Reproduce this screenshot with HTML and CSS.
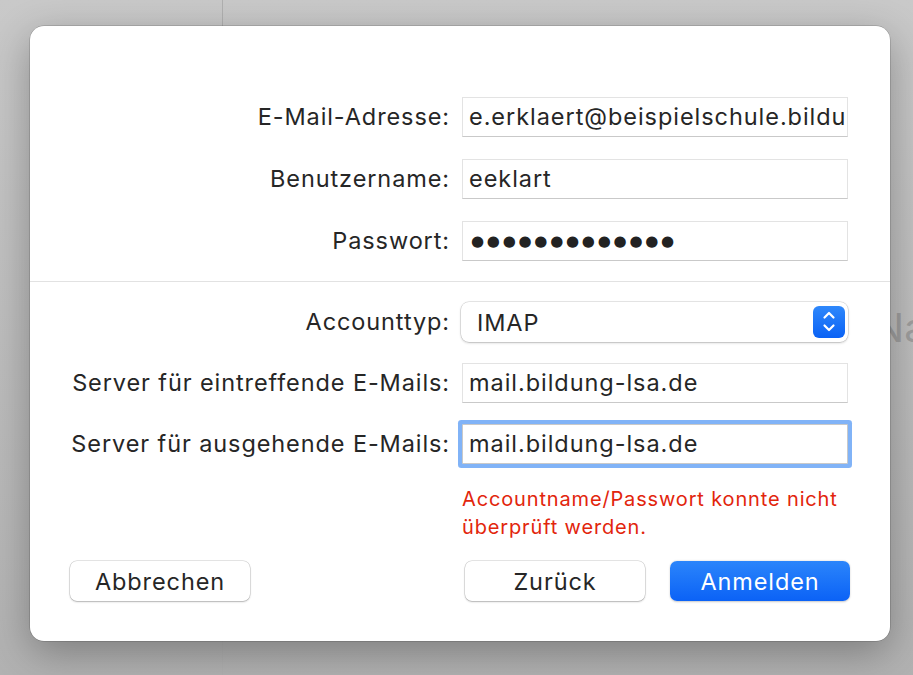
FILE: index.html
```html
<!DOCTYPE html>
<html lang="de">
<head>
<meta charset="utf-8">
<title>Account hinzufügen</title>
<link rel="stylesheet" href="styles.css">
</head>
<body>
<div class="desktop">
  <div class="bg-divider"></div>
  <div class="bg-title">Na</div>
  <div class="dialog">
    <div class="form">
      <div class="lbl">E-Mail-Adresse:</div>
      <div class="field">e.erklaert@beispielschule.bildu</div>
      <div class="lbl">Benutzername:</div>
      <div class="field">eeklart</div>
      <div class="lbl">Passwort:</div>
      <div class="field password">●●●●●●●●●●●●●</div>
    </div>
    <div class="sep"></div>
    <div class="form">
      <div class="lbl">Accounttyp:</div>
      <div class="popup">
        <span class="popup-text">IMAP</span>
        <span class="stepper">
          <svg width="32" height="32" viewBox="0 0 32 32"><path d="M11.5 11.5 L16 7 L20.5 11.5 M11.5 19.5 L16 24 L20.5 19.5" fill="none" stroke="#fff" stroke-width="2.2" stroke-linecap="round" stroke-linejoin="round"/></svg>
        </span>
      </div>
      <div class="lbl">Server für eintreffende E-Mails:</div>
      <div class="field">mail.bildung-lsa.de</div>
      <div class="lbl">Server für ausgehende E-Mails:</div>
      <div class="field focused">mail.bildung-lsa.de</div>
    </div>
    <div class="error">Accountname/Passwort konnte nicht<br>überprüft werden.</div>
    <div class="buttons">
      <button class="btn">Abbrechen</button>
      <button class="btn push">Zurück</button>
      <button class="btn primary">Anmelden</button>
    </div>
  </div>
</div>
</body>
</html>
```
FILE: styles.css
```css
html, body {
  margin: 0;
  padding: 0;
}
body {
  font-family: Inter, "Noto Sans", "DejaVu Sans", sans-serif;
  color: #262626;
}
.desktop {
  position: relative;
  width: 913px;
  height: 675px;
  overflow: hidden;
  background: linear-gradient(180deg, #c9c9c9 0%, #bdbdbd 50%, #b2b2b2 100%);
  padding-top: 26px;
  box-sizing: border-box;
}
.bg-divider {
  position: absolute;
  left: 222px;
  top: 0;
  bottom: 0;
  width: 1px;
  background: #b0b0b0;
}
.bg-title {
  position: absolute;
  left: 874px;
  top: 304px;
  white-space: nowrap;
  font-size: 40px;
  line-height: 48px;
  color: #9e9e9e;
}
.dialog {
  position: relative;
  margin-left: 30px;
  width: 860px;
  height: 615px;
  box-sizing: border-box;
  padding-top: 71px;
  background: #fff;
  border-radius: 14px;
  box-shadow: 0 0 0 0.5px rgba(0,0,0,0.25), 0 12px 40px rgba(0,0,0,0.3);
}
.form {
  display: grid;
  grid-template-columns: 419px 386px;
  column-gap: 13px;
  row-gap: 22px;
  align-items: center;
}
.form + .sep + .form {
  row-gap: 21px;
}
.lbl {
  justify-self: end;
  font-size: 23.5px;
  letter-spacing: 0.9px;
  line-height: 40px;
  white-space: nowrap;
  margin-right: -1px;
}
.field {
  height: 40px;
  box-sizing: border-box;
  border: 1px solid #e3e3e3;
  border-bottom-color: #c9c9c9;
  background: #fff;
  font-size: 23.5px;
  letter-spacing: 0.95px;
  line-height: 38px;
  padding-left: 6px;
  white-space: nowrap;
  overflow: hidden;
}
.field.password {
  font-family: "DejaVu Sans", sans-serif;
  font-size: 15px;
  letter-spacing: 2.75px;
  color: #222;
  padding-left: 8px;
}
.field.focused {
  border-color: #c9c9c9;
  box-shadow: 0 0 0 4px #81b3f7;
  border-radius: 1px;
}
.sep {
  height: 1px;
  background: #e2e2e2;
  margin: 20px 0 20px;
}
.popup {
  height: 40px;
  margin-left: -1px;
  box-sizing: border-box;
  border-radius: 8px;
  background: #fff;
  box-shadow: 0 0 0 0.5px rgba(0,0,0,0.18), 0 1px 2.5px rgba(0,0,0,0.2);
  display: flex;
  align-items: center;
  justify-content: space-between;
  padding: 0 3px 0 16px;
}
.popup-text {
  font-size: 23.5px;
  letter-spacing: 0.9px;
}
.stepper {
  width: 32px;
  height: 32px;
  border-radius: 6px;
  background: linear-gradient(180deg, #2f88fb 0%, #0a62f5 100%);
  display: flex;
}
.error {
  margin: 21px 0 0 432px;
  font-size: 20px;
  letter-spacing: 0.85px;
  line-height: 28px;
  color: #e2250c;
}
.buttons {
  display: flex;
  gap: 25px;
  padding: 0 40px;
  margin-top: 20px;
}
.btn {
  width: 180px;
  height: 40px;
  border-radius: 7px;
  border: none;
  background: #fff;
  box-shadow: 0 0 0 0.5px rgba(0,0,0,0.2), 0 1px 2px rgba(0,0,0,0.22);
  font-family: Inter, "Noto Sans", sans-serif;
  font-size: 23.5px;
  letter-spacing: 0.9px;
  color: #262626;
  padding: 0;
}
.btn.push {
  margin-left: auto;
}
.btn.primary {
  background: linear-gradient(180deg, #2b85fb 0%, #0b62f6 100%);
  color: #fff;
  box-shadow: 0 0.5px 2px rgba(0,0,0,0.22);
}
```
